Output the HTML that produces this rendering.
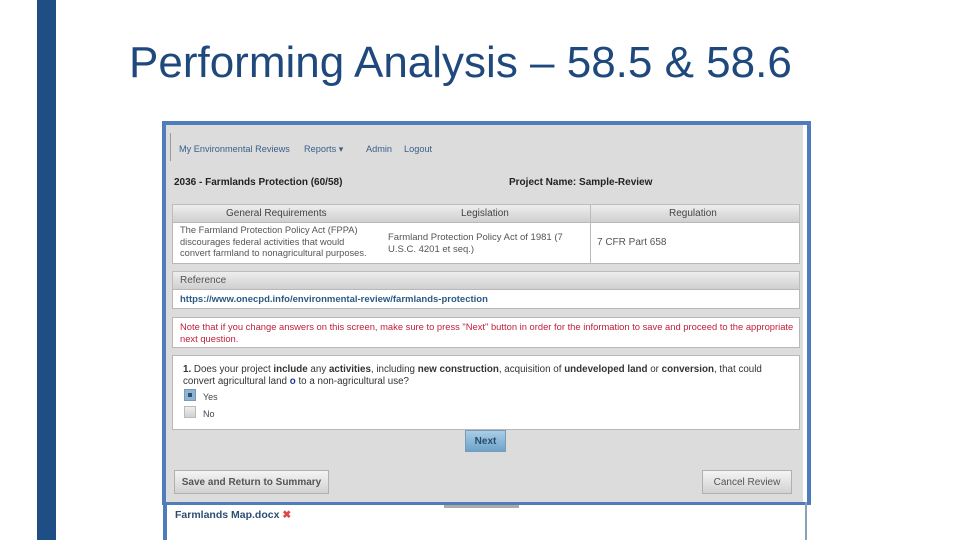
<!DOCTYPE html>
<html><head><style>
*{margin:0;padding:0;box-sizing:border-box}
body{width:960px;height:540px;background:#fff;position:relative;overflow:hidden;font-family:"Liberation Sans",Arial,sans-serif}
.a{position:absolute}
.t{font-size:10px;white-space:nowrap}
.hd{background:linear-gradient(#eeeeee,#cfcfcf);border:1px solid #bdbdbd}
.wb{background:#fff;border:1px solid #b8b8b8}
.btn{background:linear-gradient(#f4f4f4,#d2d2d2);border:1px solid #b0b0b0;font-size:10px;font-weight:bold;color:#555;text-align:center}
</style></head><body>
<div class="a" style="left:37px;top:0;width:19px;height:540px;background:#1f4e85"></div>
<div class="a" style="left:129px;top:38px;font-size:44px;color:#1f497d;white-space:nowrap">Performing Analysis – 58.5 &amp; 58.6</div>

<div class="a" style="left:162px;top:121px;width:649px;height:384px;background:#4f7cba"></div>
<div class="a" style="left:166px;top:125px;width:641px;height:378px;background:#fff"></div>
<div class="a" style="left:166px;top:125px;width:637px;height:378px;background:#dcdcdc"></div>
<div class="a" style="left:170px;top:133px;width:1px;height:28px;background:#999"></div>
<div class="a t" style="left:179px;top:144px;font-size:9.2px;color:#3a5f8a">My Environmental Reviews</div>
<div class="a t" style="left:304px;top:144px;font-size:9.2px;color:#3a5f8a">Reports ▾</div>
<div class="a t" style="left:366px;top:144px;font-size:9.2px;color:#3a5f8a">Admin</div>
<div class="a t" style="left:404px;top:144px;font-size:9.2px;color:#3a5f8a">Logout</div>
<div class="a t" style="left:174px;top:177px;font-weight:bold;color:#222">2036 - Farmlands Protection (60/58)</div>
<div class="a t" style="left:509px;top:177px;font-weight:bold;color:#222">Project Name: Sample-Review</div>

<div class="a hd" style="left:172px;top:204px;width:628px;height:19px"></div>
<div class="a t" style="left:226px;top:208px;color:#444">General Requirements</div>
<div class="a t" style="left:461px;top:208px;color:#444">Legislation</div>
<div class="a t" style="left:669px;top:208px;color:#444">Regulation</div>
<div class="a wb" style="left:172px;top:222px;width:628px;height:42px"></div>
<div class="a" style="left:590px;top:204px;width:1px;height:60px;background:#bbb"></div>
<div class="a" style="left:180px;top:225px;font-size:9.3px;line-height:11.5px;color:#555">The Farmland Protection Policy Act (FPPA)<br>discourages federal activities that would<br>convert farmland to nonagricultural purposes.</div>
<div class="a" style="left:388px;top:232px;font-size:9.5px;line-height:11.5px;color:#555">Farmland Protection Policy Act of 1981 (7<br>U.S.C. 4201 et seq.)</div>
<div class="a t" style="left:597px;top:237px;color:#555">7 CFR Part 658</div>

<div class="a hd" style="left:172px;top:271px;width:628px;height:19px"></div>
<div class="a t" style="left:180px;top:275px;color:#555">Reference</div>
<div class="a wb" style="left:172px;top:289px;width:628px;height:20px"></div>
<div class="a t" style="left:180px;top:294px;font-size:9.5px;font-weight:bold;color:#2b5b84">https://www.onecpd.info/environmental-review/farmlands-protection</div>

<div class="a wb" style="left:172px;top:317px;width:628px;height:31px"></div>
<div class="a" style="left:180px;top:321px;font-size:9.4px;line-height:11.5px;color:#c0203a;width:618px;white-space:nowrap">Note that if you change answers on this screen, make sure to press "Next" button in order for the information to save and proceed to the appropriate<br>next question.</div>

<div class="a wb" style="left:172px;top:355px;width:628px;height:75px"></div>
<div class="a" style="left:183px;top:364px;font-size:9.8px;line-height:11.5px;color:#333;width:615px;white-space:nowrap"><b>1.</b> Does your project <b>include</b> any <b>activities</b>, including <b>new construction</b>, acquisition of <b>undeveloped land</b> or <b>conversion</b>, that could<br>convert agricultural land <b style="color:#1a3aa0">o</b> to a non-agricultural use?</div>
<div class="a" style="left:184px;top:389px;width:12px;height:12px;background:#8fb3d0;border:1px solid #7a9bb8"></div>
<div class="a" style="left:188px;top:393px;width:4px;height:4px;background:#2c4f75"></div>
<div class="a t" style="left:203px;top:392px;font-size:9px;color:#444">Yes</div>
<div class="a" style="left:184px;top:406px;width:12px;height:12px;background:linear-gradient(#eee,#d0d0d0);border:1px solid #bbb"></div>
<div class="a t" style="left:203px;top:409px;font-size:9px;color:#444">No</div>

<div class="a btn" style="left:465px;top:430px;width:41px;height:22px;line-height:21px;background:linear-gradient(#a8cde6,#6ea3c9);border-color:#7a9bb8;color:#2a4a6a">Next</div>
<div class="a btn" style="left:174px;top:470px;width:155px;height:24px;line-height:23px">Save and Return to Summary</div>
<div class="a btn" style="left:702px;top:470px;width:90px;height:24px;line-height:23px;font-weight:normal">Cancel Review</div>

<div class="a" style="left:163px;top:502px;width:646px;height:3px;background:#4f7cba"></div>
<div class="a" style="left:163px;top:502px;width:4px;height:38px;background:#4f7cba"></div>
<div class="a" style="left:805px;top:502px;width:2px;height:38px;background:#8a9fba"></div>
<div class="a" style="left:444px;top:505px;width:75px;height:3px;background:#aaa"></div>
<div class="a t" style="left:175px;top:509px;font-size:10.5px;font-weight:bold;color:#2d4e72">Farmlands Map.docx <span style="color:#e04848">✖</span></div>
</body></html>
